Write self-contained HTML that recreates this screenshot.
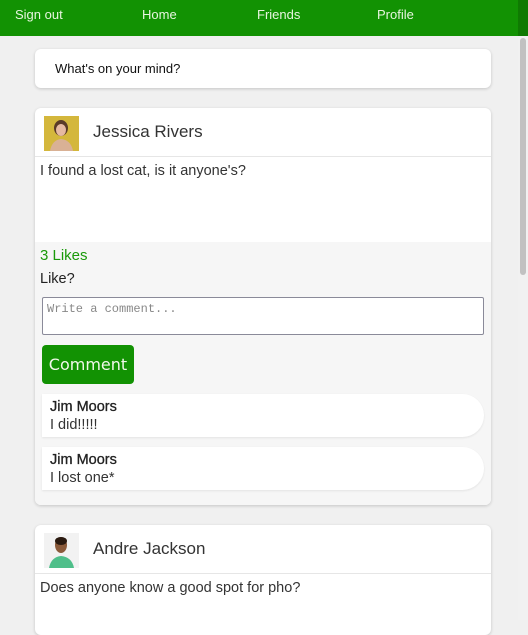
<!DOCTYPE html>
<html><head><style>
*{box-sizing:border-box}
body{margin:0;width:528px;height:620px;overflow:hidden;background:#f0f0f0;font-family:"Liberation Sans",sans-serif;position:relative}
.nav{position:absolute;left:0;top:0;width:518px;height:36px;background:#129203;color:#e8f5e0;font-size:13px}
.nav span{position:absolute;top:7px}
.sb{position:absolute;left:518px;top:0;width:10px;height:620px;background:#f1f1f1}
.sb div{position:absolute;left:2px;top:38px;width:6px;height:237px;background:#c1c1c1;border-radius:3px}
.sbt{position:absolute;left:518px;top:0;width:10px;height:36px;background:#0f7a02}
.card{position:absolute;left:35px;width:456px;background:#fff;border-radius:6px;box-shadow:0 1px 3px rgba(0,0,0,.18);overflow:hidden}
.hd{height:49px;border-bottom:1px solid #e6e6e6;position:relative}
.av{position:absolute;left:9px;top:8px;width:35px;height:35px}
.nm{position:absolute;left:58px;top:14px;font-size:17px;color:#333}
.txt{padding:6px 5px;font-size:14.5px;color:#333}
.gr{background:#f6f6f6;position:absolute;left:0;right:0}
.c{position:absolute;left:7px;width:442px;height:43px;background:#fff;border-radius:0 22px 22px 0;box-shadow:0 1px 2px rgba(0,0,0,.08);padding:4px 0 0 8px;font-size:14.5px;color:#333;line-height:18px}
.c b{font-weight:normal;color:#222;-webkit-text-stroke:.3px #222}
</style></head><body>
<div class="nav"><span style="left:15px">Sign out</span><span style="left:142px">Home</span><span style="left:257px">Friends</span><span style="left:377px">Profile</span></div>
<div class="sb"><div></div></div><div class="sbt"></div>
<div class="card" style="top:49px;height:39px"><div style="position:absolute;left:20px;top:12px;font-size:13px;color:#111">What's on your mind?</div></div>
<div class="card" style="top:108px;height:397px">
<div class="hd"><svg class="av" viewBox="0 0 35 35"><rect width="35" height="35" fill="#d4b73c"/><ellipse cx="17" cy="12" rx="7" ry="8" fill="#5a3a28"/><ellipse cx="17" cy="14" rx="5" ry="6" fill="#e6b9a2"/><path d="M6 35 Q8 24 17 23 Q27 24 29 35Z" fill="#d9b195"/></svg><div class="nm">Jessica Rivers</div></div>
<div class="txt">I found a lost cat, is it anyone's?</div>
<div class="gr" style="top:134px;height:263px">
<div style="position:absolute;left:5px;top:5px;font-size:15px;color:#1a9a0a">3 Likes</div>
<div style="position:absolute;left:5px;top:29px;font-size:14.5px;color:#222">Like?</div>
<div style="position:absolute;left:7px;top:55px;width:442px;height:38px;background:#fff;border:1px solid #8a8a99;border-radius:2px;padding:4px 4px;font-family:'Liberation Mono',monospace;font-size:12px;color:#888">Write a comment...</div>
<div style="position:absolute;left:7px;top:103px;width:92px;height:39px;background:#129203;border-radius:4px;color:#f0f8ea;font-size:16px;text-align:center;line-height:39px;font-family:'DejaVu Sans',sans-serif">Comment</div>
<div class="c" style="top:152px"><b>Jim Moors</b><br>I did!!!!!</div>
<div class="c" style="top:205px"><b>Jim Moors</b><br>I lost one*</div>
</div></div>
<div class="card" style="top:525px;height:110px">
<div class="hd"><svg class="av" viewBox="0 0 35 35"><rect width="35" height="35" fill="#f2f2f2"/><ellipse cx="17" cy="12" rx="6" ry="8" fill="#8a5a3a"/><ellipse cx="17" cy="8" rx="6" ry="4" fill="#2a1a10"/><path d="M5 35 Q7 24 17 23 Q28 24 30 35Z" fill="#4fbf8a"/></svg><div class="nm">Andre Jackson</div></div>
<div class="txt">Does anyone know a good spot for pho?</div>
</div>
</body></html>
